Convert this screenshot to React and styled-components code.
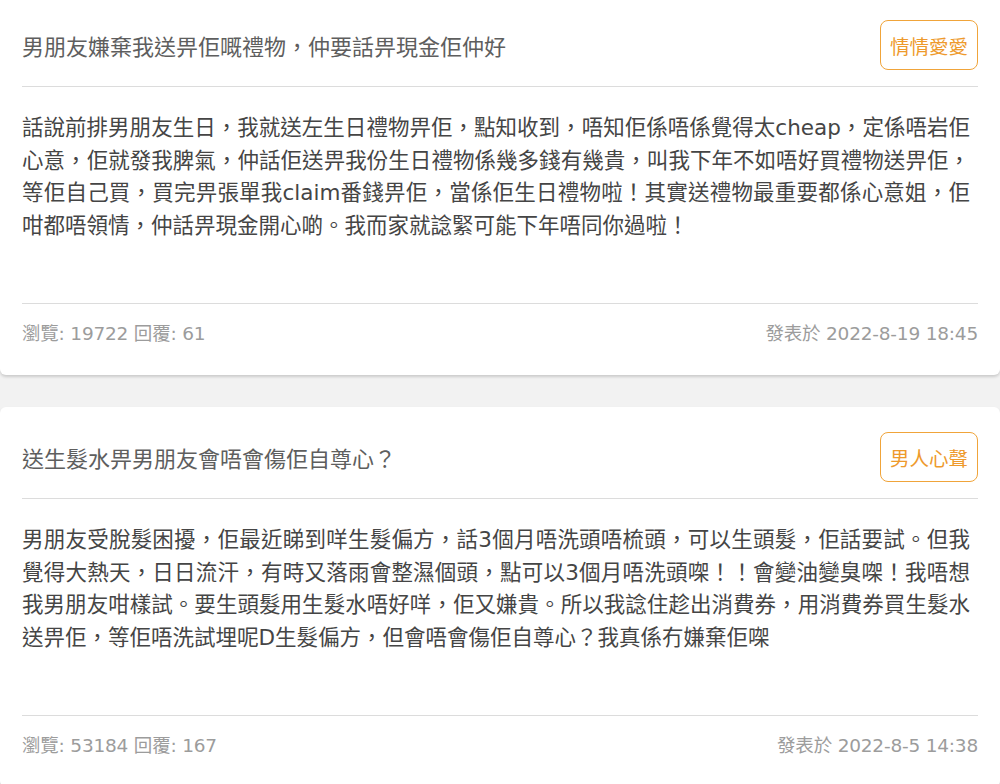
import React from 'react';
import styled, { createGlobalStyle } from 'styled-components';

// Latin glyphs in the screenshot are wide and geometric; DejaVu Sans is the
// closest in width, CJK falls through to Noto.
const FONT = `"Noto Sans CJK TC", "Noto Sans", sans-serif`;
const WIDE_FONT = `"DejaVu Sans", "Noto Sans CJK TC", sans-serif`;

const GlobalStyle = createGlobalStyle`
  html, body {
    margin: 0;
    padding: 0;
    background: #f2f2f2;
    font-family: ${FONT};
  }
`;

const posts = [
  {
    title: '男朋友嫌棄我送畀佢嘅禮物，仲要話畀現金佢仲好',
    tag: '情情愛愛',
    lines: [
      '話說前排男朋友生日，我就送左生日禮物畀佢，點知收到，唔知佢係唔係覺得太cheap，定係唔岩佢',
      '心意，佢就發我脾氣，仲話佢送畀我份生日禮物係幾多錢有幾貴，叫我下年不如唔好買禮物送畀佢，',
      '等佢自己買，買完畀張單我claim番錢畀佢，當係佢生日禮物啦！其實送禮物最重要都係心意姐，佢',
      '咁都唔領情，仲話畀現金開心啲。我而家就諗緊可能下年唔同你過啦！',
    ],
    views: 19722,
    replies: 61,
    date: '2022-8-19 18:45',
  },
  {
    title: '送生髮水畀男朋友會唔會傷佢自尊心？',
    tag: '男人心聲',
    lines: [
      '男朋友受脫髮困擾，佢最近睇到咩生髮偏方，話3個月唔洗頭唔梳頭，可以生頭髮，佢話要試。但我',
      '覺得大熱天，日日流汗，有時又落雨會整濕個頭，點可以3個月唔洗頭㗎！！會變油變臭㗎！我唔想',
      '我男朋友咁樣試。要生頭髮用生髮水唔好咩，佢又嫌貴。所以我諗住趁出消費券，用消費券買生髮水',
      '送畀佢，等佢唔洗試埋呢D生髮偏方，但會唔會傷佢自尊心？我真係冇嫌棄佢㗎',
    ],
    views: 53184,
    replies: 167,
    date: '2022-8-5 14:38',
  },
];

const Feed = styled.div`
  display: flex;
  flex-direction: column;
  gap: 32px;
  margin-top: -5px;
`;

const Card = styled.article`
  background: #fff;
  border-radius: 6px;
  box-shadow: 0 2px 3px rgba(0, 0, 0, 0.16);
  padding: 0 22px;
`;

const Header = styled.div`
  display: flex;
  align-items: center;
  justify-content: space-between;
  padding: 25px 0 16px;
  border-bottom: 1px solid #dcdcdc;
`;

const Title = styled.h2`
  margin: 0;
  font-size: 22px;
  font-weight: 400;
  color: #5e5e5e;
  line-height: 30px;
`;

const Tag = styled.span`
  box-sizing: border-box;
  height: 50px;
  width: 98px;
  display: flex;
  align-items: center;
  justify-content: center;
  border: 1.5px solid #f0a43a;
  border-radius: 8px;
  color: #ee9a2c;
  font-size: 19.5px;
  font-weight: 400;
`;

const Body = styled.div`
  padding: 25px 8px 61px 0;
  border-bottom: 1px solid #dcdcdc;
  color: #454545;
  font-family: ${WIDE_FONT};
  font-size: 21.5px;
  line-height: 32.5px;
`;

// the source justifies every full line; the last one stays ragged
const Line = styled.div`
  white-space: nowrap;
  text-align: ${(p) => (p.$last ? 'left' : 'justify')};
  text-align-last: ${(p) => (p.$last ? 'left' : 'justify')};
`;

const Footer = styled.div`
  display: flex;
  justify-content: space-between;
  padding: 18px 0 29px;
  font-family: ${WIDE_FONT};
  font-size: 18.5px;
  letter-spacing: -0.2px;
  line-height: 24px;
  color: #9c9c9c;
`;

const Post = ({ post }) => (
  <Card>
    <Header>
      <Title>{post.title}</Title>
      <Tag>{post.tag}</Tag>
    </Header>
    <Body>
      {post.lines.map((l, i) => (
        <Line key={i} $last={i === post.lines.length - 1}>
          {l}
        </Line>
      ))}
    </Body>
    <Footer>
      <span>
        瀏覽: {post.views} 回覆: {post.replies}
      </span>
      <span>發表於 {post.date}</span>
    </Footer>
  </Card>
);

export default function App() {
  return (
    <>
      <GlobalStyle />
      <Feed>
        {posts.map((p, i) => (
          <Post key={i} post={p} />
        ))}
      </Feed>
    </>
  );
}
